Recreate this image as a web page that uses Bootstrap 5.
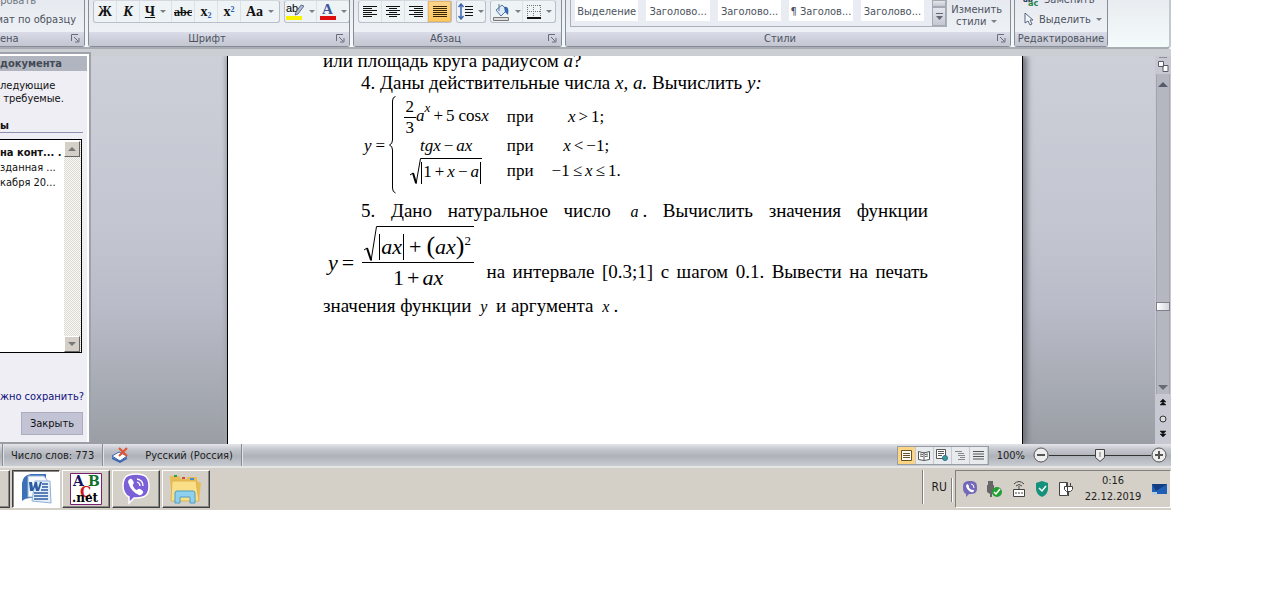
<!DOCTYPE html>
<html lang="ru">
<head>
<meta charset="utf-8">
<meta name="viewport" content="width=device-width, initial-scale=1">
<title>Документ</title>
<link href="https://cdn.jsdelivr.net/npm/bootstrap@5.3.0/dist/css/bootstrap.min.css" rel="stylesheet">
<style>
body{background:#fff;color:#1e1e1e;font:11px/13px "DejaVu Sans Condensed","DejaVu Sans",sans-serif;overflow-x:hidden}
button,input{font:inherit;color:inherit}
button{background:none;border:0;padding:0}
svg{display:block;flex:none}
.desktop{margin-right:109px}
/* ribbon */
.ribbon{height:49px;gap:3px;background:linear-gradient(#e9ecf0,#f4fbfb);border-bottom:2px solid #a9adb3;border-right:2px solid #c3c8d0;border-bottom-right-radius:4px;color:#4c5360;overflow:hidden}
.rgroup{height:47px;border:1px solid #878d97;border-top:0;border-radius:0 0 3px 3px;background:linear-gradient(#e6e9ef,#eef1f5 32px)}
.rbody{height:32px;overflow:hidden}
.rfoot{height:14px;background:linear-gradient(#d9dce8,#c3c6d0);line-height:14px;position:relative}
.launcher{position:absolute;right:4px;top:2px}
.lowline{padding-bottom:6px;margin-top:6px}
.g-clip{width:85px;border-left:0;border-radius:0 0 3px 0}.g-font{width:262px}.g-para{width:209px}.g-styles{width:446px}.g-edit{width:94px}
.tools{height:23px;border:1px solid #b9bec8;border-top-color:#d4d7dd;border-radius:3px;background:#eef3f5;color:#111}
.tools button{height:21px;display:flex;align-items:center;justify-content:center;border-right:1px solid #dde1e5;font:bold 14px/20px "Liberation Serif",serif;color:#111}
.tools button:last-child{border-right:0}
.tools .tiny{font-size:12px}
.tools sub,.tools sup{font-size:8px;color:#2f5fb5}
.c23{width:23px}.c28{width:28px}.c32{width:32px}.c38{width:38px}
.tools .picked{background:linear-gradient(#fbd58e,#fdc65c);box-shadow:inset 0 0 0 1px #e8b765}
.tri::after{content:"";border:3px solid transparent;border-top-color:#7b8088;border-bottom:0;margin-left:5px;display:inline-block;vertical-align:2px}
.gallery{width:377px;height:27px;border:1px solid #aab0ba;border-top:0;background:#e9ecf2;gap:8px;padding-left:4px}
.gallery .sty{width:64px;height:21px;background:#fff;line-height:23px;color:#4c5360;white-space:nowrap;text-align:center}
.gmore{width:14px;margin-left:auto}
.gmore button{height:20px;border:1px solid #a4a9b4;background:linear-gradient(#e4e6ec,#c5c8d2)}
.gmore button:first-child{height:7px}
.restyle{line-height:12px}
/* work area */
.work{background:linear-gradient(#cdd0d9,#c3c6d0 45%,#b9bcc8 65%,#9a9ea4);height:388px}
.seam{height:7px;background:#cbcfd3}
.task{width:91px;margin-top:-4px;height:390px;border-right:2px solid #9ea2ab;border-top:2px solid #9ea2ab;background:#efeef5;color:#111;box-shadow:inset -2px 2px #fff;padding:2px 6px 0 0;white-space:nowrap;overflow:hidden}
.tt{background:#b1b5c0;height:15px;margin-right:-4px;font-weight:700;line-height:15px;color:#444a55}
.task h2{font:bold 11px/13px "DejaVu Sans Condensed",sans-serif;margin:14px 0 6px;border-bottom:1px solid #8f8fb0}
.tlist{border:1px solid #000;border-left:0;height:214px;background:#fff;margin-right:1px;line-height:15px;padding-top:1px}
.asklink{color:#10107c;margin:37px 0 9px}
.oldbar{width:17px;background:repeating-conic-gradient(#d9d7d0 0 25%,#fbfbf8 0 50%) 0 0/2px 2px}
.oldbar button{width:16px;height:16px;background:#d4d0c8;border:1px solid;border-color:#fff #666 #666 #fff;display:flex;align-items:center;justify-content:center}
.closebtn{width:62px;height:23px;background:#c3c3d6;border:1px solid #acacbc}
.sheet{width:796px;background:#fff;border:1px solid #000;border-width:0 1px;box-shadow:4px 0 6px #6d7078,-2px 0 4px #a5a8b0;padding:0 94px 0 95px;overflow:hidden;color:#000;font:19px/22px "Liberation Serif","Times New Roman",serif}
.clipx{overflow:hidden;padding-left:4px}
.sheet p{margin:0}
.sheet .first{margin-top:-6px}
.ind{text-indent:38px}
.just{text-align:justify}
.cases{font-size:17px;line-height:18px;margin-left:41px;height:106px;padding-top:2px}
.cases .lhs{margin-top:41px}
.cgrid{display:grid;grid-template-columns:92px 26px 76px;column-gap:15px;justify-items:center;align-items:center;grid-template-rows:42px 16px 34px;white-space:nowrap}
.o{margin:0 3px}
.frac{display:inline-flex;flex-direction:column;align-items:center;vertical-align:middle}
.frac>span:first-child{border-bottom:1px solid #000}
.cases .frac{line-height:20px}
.cases .frac>span{padding:0 2px}
.rootbox{display:inline-flex;align-items:stretch}
.rootbox .rad{border-top:1px solid #000;padding:3px 1px 0 0}
.bars{border:1px solid #000;border-width:0 1px;padding:0 1px;display:inline-block}
.cases .rad{height:26px}
.cases .bars{height:22px;line-height:20px}
.eq2{display:inline-flex;align-items:center;font-size:22px;line-height:26px;height:72px;margin:0 5px;vertical-align:8px;white-space:nowrap;text-indent:0}
.eq2 .lhs{padding-top:8px}
.eq2 .rad{height:36px;padding:6px 3px 0 2px}
.eq2 .rad .o{margin:0 5px}
.eq2 .den{line-height:30px}
.par{font-size:26px}
.eq2 sup,.cases sup{font-size:13px;top:-9px;line-height:0}
.var{font-size:16px;margin:0 4px}
/* document scroll bar */
.vbar{width:16px;background:#c7c8d2;padding-top:1px}
.track{width:14px;background:#b4b6c0;border:1px solid #a2a4b0;border-width:0 1px}
.thumb{width:14px;height:9px;border:1px solid #7d8089;background:linear-gradient(90deg,#fff,#d5d6dc);margin-bottom:74px}
/* status bar */
.status{height:24px;background:linear-gradient(#e3e5ea,#c4c6cd 25%,#aeb2b9 55%,#c9ccd1);border-bottom:2px solid #e5e5e5;white-space:nowrap}
.status>.cell{height:22px;border-right:1px solid #878b93;box-shadow:1px 0 #e1e3e8;min-width:3px}
.views{border:1px solid #989ca4;height:19px;background:#e8ebee}
.views button{width:18px;height:17px;border-right:1px solid #c5c8cc;display:flex;align-items:center;justify-content:center}
.views button:first-child{background:#fbd583}
.zoomr{appearance:none;width:102px;height:16px;background:linear-gradient(#333,#333) center/100% 1px no-repeat;margin:0;padding:0}
.zoomr::-webkit-slider-thumb{appearance:none;width:10px;height:13px;background:url("data:image/svg+xml,%3Csvg xmlns='http://www.w3.org/2000/svg' width='10' height='13'%3E%3Cpath d='M.5.5h9v8L5 12.500.5 8.500z' fill='%23eee' stroke='%23444'/%3E%3Cpath d='M5 3v5' stroke='%23777'/%3E%3C/svg%3E")}
/* taskbar */
.taskbar{height:42px;background:#d4d0c8;padding-top:2px;gap:2px}
.tb{width:48px;height:38px;border:1px solid;border-color:#fff #404040 #404040 #fff;box-shadow:inset -1px -1px #888;display:flex;align-items:center;justify-content:center}
.tb.on{background:#fff;border-color:#404040 #fff #fff #404040;box-shadow:inset 1px 1px #888}
.tb.cut{width:10px;border-left:0}
.tray{height:38px;border:1px solid;border-color:#808080 #fff #fff #808080;width:216px;padding:0 3px 0 6px}
.clock{line-height:16px}
.lang{font-size:12px;padding:0 2px 5px 6px}
.sep{width:2px;height:34px;border-left:1px solid #808080;border-right:1px solid #fff}
.sep.low{height:24px}
</style>
</head>
<body>
<div class="desktop">
<header class="ribbon d-flex">
  <section class="rgroup g-clip">
    <div class="rbody d-flex flex-column justify-content-end text-nowrap align-items-end"><span class="pe-5 text-secondary">ровать</span><span class="lowline pe-2">мат по образцу</span></div>
    <div class="rfoot">ена<button class="launcher" aria-label="Буфер"><svg width="9" height="9" fill="none" stroke="#666c78"><path d="M.5 7V.5H7M3 3l4 4M8 4v4H4"/></svg></button></div>
  </section>
  <section class="rgroup g-font">
    <div class="rbody d-flex ps-1 gap-1">
      <div class="tools d-flex">
        <button class="c23">Ж</button><button class="c23"><i>К</i></button><button class="c32 tri"><u>Ч</u></button><button class="c23 tiny"><s>abc</s></button><button class="c23"><span>x<sub>2</sub></span></button><button class="c23"><span>x<sup>2</sup></span></button><button class="c38 tri">Aa</button>
      </div>
      <div class="tools d-flex">
        <button class="c32 tri" aria-label="Цвет выделения"><svg width="18" height="19"><text x="0" y="10" font-family="Liberation Sans" font-weight="400" font-size="11">ab</text><path d="M15 3l3 1-6 8-3 1 1-3z" fill="#a9bdd8" stroke="#446" stroke-width=".7"/><path d="M0 14h16v4H0z" fill="#fbf200"/></svg></button>
        <button class="c32 tri" aria-label="Цвет текста"><svg width="16" height="19"><text x="2" y="12" font-family="Liberation Serif" font-size="15" fill="#3b5998">A</text><path d="M0 14h16v4H0z" fill="#e00f0f"/></svg></button>
      </div>
    </div>
    <div class="rfoot text-center pe-4">Шрифт<button class="launcher" aria-label="Шрифт"><svg width="9" height="9" fill="none" stroke="#666c78"><path d="M.5 7V.5H7M3 3l4 4M8 4v4H4"/></svg></button></div>
  </section>
  <section class="rgroup g-para">
    <div class="rbody d-flex ps-1 gap-1">
      <div class="tools d-flex">
        <button class="c23" aria-label="Влево"><svg width="14" height="13" stroke="#111"><path d="M0 1.5h14M0 3.5h9M0 5.5h14M0 7.5h9M0 9.5h14M0 11.5h9"/></svg></button>
        <button class="c23" aria-label="По центру"><svg width="14" height="13" stroke="#111"><path d="M0 1.5h14M3 3.5h8M0 5.5h14M3 7.5h8M0 9.5h14M3 11.5h8"/></svg></button>
        <button class="c23" aria-label="Вправо"><svg width="14" height="13" stroke="#111"><path d="M0 1.5h14M5 3.5h9M0 5.5h14M5 7.5h9M0 9.5h14M5 11.5h9"/></svg></button>
        <button class="c23 picked" aria-label="По ширине"><svg width="14" height="13" stroke="#3a2500"><path d="M0 1.5h14M0 3.5h14M0 5.5h14M0 7.5h14M0 9.5h14M0 11.5h14"/></svg></button>
      </div>
      <div class="tools d-flex"><button class="tri c28" aria-label="Интервал"><svg width="15" height="17" fill="none" stroke="#111"><path d="M7 3.5h8M7 6.5h8M7 9.5h8M7 12.5h8"/><path d="M3 1v15M.5 4L3 1l2.500 3M.5 13L3 16l2.500-3" stroke="#3d67b0" stroke-width="1.500"/></svg></button></div>
      <div class="tools d-flex">
        <button class="c32 tri" aria-label="Заливка"><svg width="17" height="18"><path d="M3 7l6-5 5 5-6 6z" fill="#dfeaf7" stroke="#55749c"/><path d="M6 1v7" stroke="#55749c"/><path d="M11 4c4-1 5 2 4 8l-3-3z" fill="#3468ad"/><path d="M.5 14.500h15v3H.5z" fill="#ddd" stroke="#777"/></svg></button>
        <button class="c32 tri" aria-label="Границы"><svg width="14" height="14" fill="none" stroke="#777" stroke-dasharray="1 1"><path d="M0 .5h14M.5 0v13M6.500 0v13M13.500 0v13M0 6.500h14"/><path d="M0 13h14" stroke="#111" stroke-dasharray="none" stroke-width="2"/></svg></button>
      </div>
    </div>
    <div class="rfoot text-center pe-4">Абзац<button class="launcher" aria-label="Абзац"><svg width="9" height="9" fill="none" stroke="#666c78"><path d="M.5 7V.5H7M3 3l4 4M8 4v4H4"/></svg></button></div>
  </section>
  <section class="rgroup g-styles">
    <div class="rbody d-flex ps-1">
      <div class="gallery d-flex">
        <button class="sty">Выделение</button><button class="sty">Заголово...</button><button class="sty">Заголово...</button><button class="sty">¶ Заголов...</button><button class="sty">Заголово...</button>
        <div class="gmore d-flex flex-column"><button aria-label="Вниз"></button><button aria-label="Ещё"><svg class="mx-auto" width="9" height="9"><path d="M1 1.500h7" stroke="#667"/><path d="M1 4h7L4.500 8z" fill="#667"/></svg></button></div>
      </div>
      <button class="restyle px-1 pt-1 ms-auto me-1 text-center align-self-start">Изменить<br><span class="tri">стили</span></button>
    </div>
    <div class="rfoot text-center pe-3">Стили<button class="launcher" aria-label="Стили"><svg width="9" height="9" fill="none" stroke="#666c78"><path d="M.5 7V.5H7M3 3l4 4M8 4v4H4"/></svg></button></div>
  </section>
  <section class="rgroup g-edit">
    <div class="rbody d-flex flex-column justify-content-end ps-2">
      <button class="d-flex align-items-end gap-1"><svg width="17" height="13"><text x="0" y="9" font-size="8" font-weight="bold" fill="#235">ab</text><text x="5" y="13" font-size="9" font-weight="bold" fill="#27834b">ac</text></svg>Заменить</button>
      <button class="lowline d-flex align-items-center gap-1"><svg width="12" height="14"><path d="M2 1v10l3-2 2 4 2-1-2-4h3z" fill="#f3f8ff" stroke="#59657c"/></svg><span class="tri">Выделить</span></button>
    </div>
    <div class="rfoot text-center">Редактирование</div>
  </section>
</header>
<div class="seam"></div>
<div class="work d-flex">
  <aside class="task">
    <div class="tt">документа</div>
    <p class="mb-0 mt-2">ледующие<br>&nbsp;требуемые.</p>
    <h2>ы</h2>
    <div class="tlist d-flex justify-content-between">
      <div class="pt-1"><b class="d-block">на конт... .</b>зданная ...<br>кабря 20...</div>
      <div class="oldbar d-flex flex-column justify-content-between"><button aria-label="Вверх"><svg width="8" height="4"><path d="M4 0l4 4H0z" fill="#777"/></svg></button><button aria-label="Вниз"><svg width="8" height="4"><path d="M0 0h8L4 4z" fill="#777"/></svg></button></div>
    </div>
    <a class="asklink d-block text-decoration-none" href="#">жно сохранить?</a>
    <button class="closebtn d-block ms-auto">Закрыть</button>
  </aside>
  <div class="clipx d-flex flex-grow-1">
  <main class="sheet mx-auto">
    <p class="first">или площадь круга радиусом <i>a</i>?</p>
    <p class="ind">4. Даны действительные числа <i>x, a.</i> Вычислить <i>y:</i></p>
    <div class="cases d-flex align-items-start">
      <span class="lhs"><i>y</i><span class="ms-1">=</span></span>
      <svg class="ms-1 me-1" width="7" height="98" fill="none" stroke="#000"><path d="M6.500.5Q3.500 1 3.500 5v39Q3.500 48 .5 49 3.500 50 3.500 54v38q0 4 3 5"/></svg>
      <div class="cgrid">
        <span><span class="frac"><span>2</span><span>3</span></span><i>a</i><sup><i>x</i></sup><span class="o">+</span>5<span class="ms-1">cos</span><i>x</i></span><span>при</span><span><i>x</i><span class="o">&gt;</span>1;</span>
        <span><i>tgx</i><span class="o">−</span><i>ax</i></span><span>при</span><span><i>x</i><span class="o">&lt;</span>−1;</span>
        <span class="rootbox"><svg width="11" height="27" fill="none" stroke="#000"><path d="M0 17l3-2"/><path d="M3 15l3 10" stroke-width="2"/><path d="M6 26L10.500.5H11"/></svg><span class="rad"><span class="bars">1<span class="o">+</span><i>x</i><span class="o">−</span><i>a</i></span></span></span><span>при</span><span>−1<span class="o">≤</span><i>x</i><span class="o">≤</span>1.</span>
      </div>
    </div>
    <p class="ind just">5. Дано натуральное число <i class="var">a</i>. Вычислить значения функции <span class="eq2"><span class="lhs"><i>y</i><span class="ms-1">=</span></span><span class="frac ms-2"><span class="rootbox"><svg width="15" height="36" fill="none" stroke="#000"><path d="M2 24l3-2"/><path d="M5 22l4 12" stroke-width="2"/><path d="M9 35L14.500.5H15"/></svg><span class="rad"><span class="bars"><i>ax</i></span><span class="o">+</span><span class="par">(</span><i>ax</i><span class="par">)</span><sup>2</sup></span></span><span class="den">1<span class="o">+</span><i>ax</i></span></span></span> на интервале [0.3;1] с шагом 0.1. Вывести на печать значения функции <i class="var">y</i> и аргумента <i class="var">x</i>.</p>
  </main>
  </div>
  <div class="vbar d-flex flex-column align-items-center">
    <svg width="14" height="17" fill="none" stroke="#555b68"><path d="M3 0h8"/><path d="M2.500 4.500h5v5h-5zM7 8.500h5v6H7z" fill="#fff"/></svg>
    <div class="track d-flex flex-column align-items-center flex-grow-1 justify-content-between"><svg class="mt-2" width="10" height="5"><path d="M5 0l5 5H0z" fill="#555b68"/></svg><div class="thumb mt-auto"></div><svg class="mb-1" width="10" height="5"><path d="M0 0h10L5 5z" fill="#656a74"/></svg></div>
    <svg width="14" height="50"><path d="M7 5l3 3H4zM7 8l3 3H4zM7 43l3-3H4zM7 40l3-3H4z" fill="#111" stroke="#111" stroke-width=".5"/><circle cx="7" cy="25" r="3" fill="#ddd" stroke="#333"/></svg>
  </div>
</div>
<footer class="status d-flex align-items-center">
  <span class="cell"></span>
  <span class="cell d-flex align-items-center ps-2 pe-2">Число слов: 773</span>
  <span class="cell d-flex align-items-center px-2 gap-3"><svg width="18" height="16"><path d="M1 9l7-4 8 4-7 5z" fill="#fff" stroke="#3866b4"/><path d="M1 10l8 4 7-4v2l-7 4-8-4z" fill="#3866b4"/><path d="M8 1l8 8M16 1L8 9" stroke="#e2532e" stroke-width="2"/></svg>Русский (Россия)</span>
  <div class="views d-flex ms-auto">
    <button aria-label="Разметка"><svg width="11" height="11" fill="#fff" stroke="#6b5320"><path d="M.5.5h10v10H.5zM2 3.500h7M2 5.500h7M2 7.500h7"/></svg></button>
    <button aria-label="Чтение"><svg width="12" height="11" fill="#fff" stroke="#555"><path d="M.5 1.500L6 3l5.500-1.500v8L6 10.500.5 9.500zM6 2v8M2 4l3 .5M2 6l3 .5M7 4.500l3-.5M7 6.500l3-.5"/></svg></button>
    <button aria-label="Веб"><svg width="12" height="12" fill="#fff" stroke="#555"><path d="M.5.5h9v9h-9zM2 2.500h6M2 4.500h6M2 6.500h4"/><circle cx="9" cy="9" r="2.500" fill="#3aa087" stroke="#2b6f9c"/></svg></button>
    <button aria-label="Структура"><svg width="10" height="11" stroke="#888"><path d="M0 1.500h7M3 3.500h6M3 5.500h7M5 7.500h5M3 9.500h7"/></svg></button>
    <button aria-label="Черновик"><svg width="11" height="11" stroke="#555"><path d="M0 1.500h11M0 4h11M0 6.500h11M0 9h11"/></svg></button>
  </div>
  <label class="ms-2 me-2" for="zm">100%</label>
  <button aria-label="Уменьшить"><svg width="16" height="16" fill="#eee" stroke="#555"><circle cx="8" cy="8" r="7"/><path d="M4 8h8" stroke-width="2"/></svg></button>
  <input class="zoomr" id="zm" type="range" min="0" max="100" value="50">
  <button class="me-1" aria-label="Увеличить"><svg width="16" height="16" fill="#eee" stroke="#555"><circle cx="8" cy="8" r="7"/><path d="M4 8h8M8 4v8" stroke-width="2"/></svg></button>
</footer>
<nav class="taskbar d-flex align-items-start">
  <button class="tb cut" aria-label="Пуск"></button>
  <button class="tb on" aria-label="Word"><svg width="32" height="32"><path d="M2 28V10Q3 2 11 1h15v24H11Q5 25 2 28z" fill="#3b6fb6"/><path d="M8 3h16l3 4v17H8z" fill="#f6fafe" stroke="#9ab5d8"/><path d="M15 8h15l1 22-19-2z" fill="#e5effa" stroke="#8fb0d6"/><path d="M22 11h6M22 14h6M21 17h7M14 20h14M14 23h14M14 26h14" stroke="#2c5ba0" stroke-width="1.500"/><path d="M9 9h3l1 6 2-6h2l1 6 2-6h2l-3 9h-3l-1-4-2 4h-3z" fill="#2d5ca5"/></svg></button>
  <button class="tb" aria-label="ABC.net"><svg width="32" height="34" font-family="DejaVu Serif" font-weight="bold"><path d="M.5 1.500h31v31H.5z" fill="#fff" stroke="#7a2070"/><text x="3" y="14" font-size="14" fill="#12125c">A</text><text x="18" y="14" font-size="14" fill="#10702a">B</text><text x="10" y="25" font-size="14" fill="#d01818">C</text><text x="2" y="30" font-size="12" fill="#000">.net</text></svg></button>
  <button class="tb" aria-label="Viber"><svg width="30" height="32"><path d="M15 1C5 1 2 5 2 13c0 6 2 9 6 11v6l5-5h2c10 0 13-4 13-12S25 1 15 1z" fill="#7b5fd6" stroke="#fff" stroke-width="1.500"/><path d="M9 6q2-1 4 4-2 2-1 3 2 4 4 4 2-2 3-1 4 2 3 4-2 3-4 2Q10 19 7 9q0-2 2-3z" fill="#fff"/><path d="M16 6q6 1 6 7M16 9q3 1 3 4" fill="none" stroke="#fff" stroke-width="1.300"/></svg></button>
  <button class="tb" aria-label="Проводник"><svg width="34" height="32"><path d="M1 6V3h9l2 3h6V4h10v4l4 2-2 18H3z" fill="#e8bd55"/><path d="M3 8h24l3 20H2z" fill="#fadf86" stroke="#dcb453"/><path d="M5 2h3v2H5z" fill="#35a04c"/><path d="M13 4h3v2h-3z" fill="#d64b38"/><path d="M21 5h4v2h-4z" fill="#4a8ad0"/><path d="M6 30V20q0-2 2-2h16q2 0 2 2v10h-5v-6H11v6z" fill="#8fd0ee" stroke="#4f9dc4"/></svg></button>
  <span class="sep ms-auto"></span>
  <span class="lang align-self-center">RU</span>
  <span class="sep low align-self-center"></span>
  <div class="tray d-flex align-items-center gap-2">
    <svg width="16" height="18"><path d="M8 1C2 1 1 3 1 8c0 3 1 5 3 6v3l3-3c6 0 8-1 8-6S14 1 8 1z" fill="#7468b8"/><path d="M5 4q1 0 2 2-1 2 3 4 2-1 2 1-1 2-3 1-4-2-5-6z" fill="#fff"/><path d="M9 4q3 0 3 4" fill="none" stroke="#fff"/></svg>
    <svg width="17" height="18"><path d="M2 1h5v4H2zM1 5h7v7l-2 2v3H4v-3l-3-2z" fill="#666"/><circle cx="11" cy="12" r="5" fill="#23a033"/><path d="M8 12l2 2 4-5" fill="none" stroke="#fff" stroke-width="1.500"/></svg>
    <svg width="16" height="18" fill="#fff" stroke="#444"><path d="M2.500 9.500h11v7h-11zM4 13h2M7 13h2M10 13h2"/><path d="M3 4q5-5 10 0M5 6q3-3 6 0M8 6v3" fill="none"/></svg>
    <svg width="15" height="18"><path d="M7 1l6 2v6q0 5-6 8-6-3-6-8V3z" fill="#15917b"/><path d="M4 8l3 3 4-5" fill="none" stroke="#fff" stroke-width="1.500"/></svg>
    <svg width="16" height="18" fill="#fff" stroke="#444"><path d="M1.500 2.500h8v13h-8zM6.500 6.500h8v3l-2 2h-4l-2-2zM8.500 3v3M12.500 3v3M10.500 11v5"/></svg>
    <div class="clock text-center flex-grow-1">0:16<br>22.12.2019</div>
    <svg width="15" height="14"><path d="M0 2h15v10H0z" fill="#1f5fb5"/><path d="M0 2h15L4 9z" fill="#123d80"/><path d="M0 10h5v3H0z" fill="#bcd"/></svg>
  </div>
</nav>
</div>
<script src="https://cdn.jsdelivr.net/npm/bootstrap@5.3.0/dist/js/bootstrap.bundle.min.js"></script>
</body>
</html>
